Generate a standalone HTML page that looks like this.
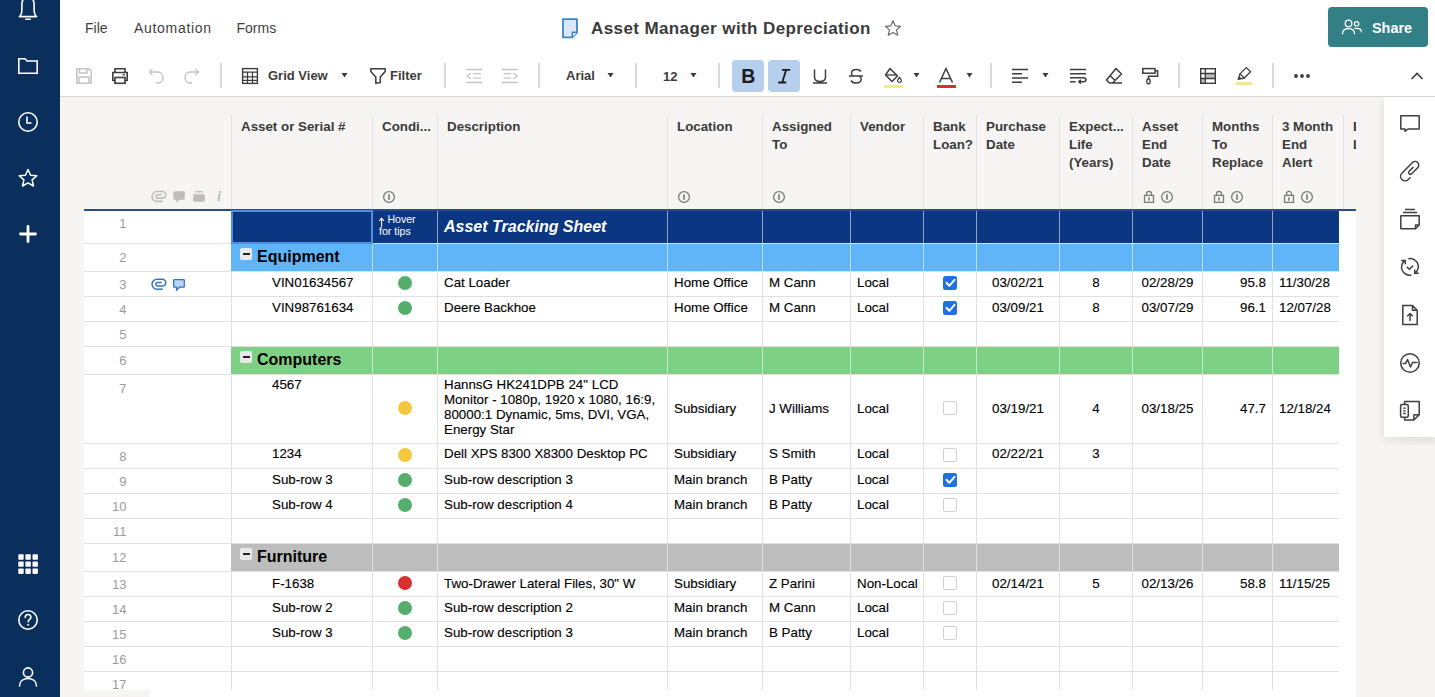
<!DOCTYPE html>
<html><head><meta charset="utf-8">
<style>
*{box-sizing:border-box;margin:0;padding:0}
html,body{width:1435px;height:697px;overflow:hidden;background:#f6f5f3;font-family:"Liberation Sans",sans-serif;position:relative}
.abs{position:absolute}
.t{position:absolute;white-space:nowrap;line-height:1}
.g{-webkit-text-stroke:0.12px #000}
svg{position:absolute;overflow:visible}
</style></head><body>

<div class="abs" style="left:0;top:0;width:60px;height:697px;background:#0b2f5c"></div>
<svg style="left:0;top:0" width="60" height="30" viewBox="0 0 60 30"><path d="M19.4 16.6 C21.6 15 21.9 12.5 21.9 9 V4 C21.9 0 24.5 -3 28 -3 C31.5 -3 34.1 0 34.1 4 V9 C34.1 12.5 34.4 15 36.6 16.6 Z" fill="none" stroke="#fff" stroke-width="1.6" stroke-linejoin="round"/><path d="M25.8 19.2 H30.2" stroke="#fff" stroke-width="1.6" stroke-linecap="round"/></svg>
<svg style="left:0;top:50" width="60" height="30" viewBox="0 50 60 30"><path d="M18.8 58.8 H25 L27 61 H37.2 V73.2 H18.8 Z" fill="none" stroke="#fff" stroke-width="1.6" stroke-linejoin="miter"/></svg>
<svg style="left:0;top:100" width="60" height="50" viewBox="0 100 60 50"><circle cx="28" cy="122" r="9.2" fill="none" stroke="#fff" stroke-width="1.6"/><path d="M27 116.5 V123 H31.5" fill="none" stroke="#fff" stroke-width="1.6"/></svg>
<svg style="left:0;top:160" width="60" height="40" viewBox="0 160 60 40"><path d="M28 169.5 L30.6 175.2 L36.8 175.8 L32.1 179.9 L33.5 186 L28 182.8 L22.5 186 L23.9 179.9 L19.2 175.8 L25.4 175.2 Z" fill="none" stroke="#fff" stroke-width="1.5" stroke-linejoin="round"/></svg>
<svg style="left:0;top:220" width="60" height="30" viewBox="0 220 60 30"><path d="M28 226.5 V241.5 M20.5 234 H35.5" stroke="#fff" stroke-width="2.8" stroke-linecap="round"/></svg>
<svg style="left:0;top:540" width="60" height="40" viewBox="0 540 60 40"><rect x="18.3" y="554.3" width="5.4" height="5.4" rx="0.8" fill="#fff"/><rect x="25.4" y="554.3" width="5.4" height="5.4" rx="0.8" fill="#fff"/><rect x="32.5" y="554.3" width="5.4" height="5.4" rx="0.8" fill="#fff"/><rect x="18.3" y="561.4" width="5.4" height="5.4" rx="0.8" fill="#fff"/><rect x="25.4" y="561.4" width="5.4" height="5.4" rx="0.8" fill="#fff"/><rect x="32.5" y="561.4" width="5.4" height="5.4" rx="0.8" fill="#fff"/><rect x="18.3" y="568.5" width="5.4" height="5.4" rx="0.8" fill="#fff"/><rect x="25.4" y="568.5" width="5.4" height="5.4" rx="0.8" fill="#fff"/><rect x="32.5" y="568.5" width="5.4" height="5.4" rx="0.8" fill="#fff"/></svg>
<svg style="left:0;top:600" width="60" height="40" viewBox="0 600 60 40"><circle cx="28" cy="620" r="9.2" fill="none" stroke="#fff" stroke-width="1.6"/><path d="M25.2 617.5 C25.2 615.5 26.5 614.5 28 614.5 C29.6 614.5 30.9 615.6 30.9 617.2 C30.9 619.3 28.2 619.6 28.2 621.8" fill="none" stroke="#fff" stroke-width="1.6" stroke-linecap="round"/><circle cx="28.2" cy="624.8" r="1" fill="#fff"/></svg>
<svg style="left:0;top:660" width="60" height="37" viewBox="0 660 60 37"><circle cx="28" cy="672.5" r="4.6" fill="none" stroke="#fff" stroke-width="1.6"/><path d="M19.5 686 C19.5 681 23.5 678.5 28 678.5 C32.5 678.5 36.5 681 36.5 686" fill="none" stroke="#fff" stroke-width="1.6" stroke-linecap="round"/></svg>
<div class="abs" style="left:60px;top:0;width:1375px;height:96px;background:#fff"></div>
<div class="abs" style="left:60px;top:96px;width:1375px;height:1px;background:#d6d6d6"></div>
<div class="t" style="left:85px;top:21.3px;font-size:14px;color:#3f3f3f;letter-spacing:0px">File</div>
<div class="t" style="left:134px;top:21.3px;font-size:14px;color:#3f3f3f;letter-spacing:0.7px">Automation</div>
<div class="t" style="left:236.5px;top:21.3px;font-size:14px;color:#3f3f3f;letter-spacing:0px">Forms</div>
<svg style="left:0;top:0" width="1" height="1" viewBox="0 0 1 1"><path d="M563 19.1 H577 V32.6 L572.3 37.3 H563 Z" fill="#dde6f8" stroke="#3a84c9" stroke-width="1.8" stroke-linejoin="round"/><path d="M577 32.2 H572.4 V37.2" fill="#fff" stroke="#3a84c9" stroke-width="1.6"/></svg>
<div class="t" style="left:591px;top:20px;font-size:17px;font-weight:bold;color:#3b3b3b;letter-spacing:0.4px">Asset Manager with Depreciation</div>
<svg style="left:0;top:0" width="1" height="1" viewBox="0 0 1 1"><path d="M893 20.8 L895.2 25.8 L900.6 26.3 L896.5 29.9 L897.8 35.2 L893 32.4 L888.2 35.2 L889.5 29.9 L885.4 26.3 L890.8 25.8 Z" fill="none" stroke="#6b6b6b" stroke-width="1.2" stroke-linejoin="round"/></svg>
<div class="abs" style="left:1328px;top:7px;width:100px;height:40px;background:#337f86;border-radius:4px"></div>
<svg style="left:0;top:0" width="1" height="1" viewBox="0 0 1 1"><circle cx="1348.5" cy="23.5" r="3.3" fill="none" stroke="#fff" stroke-width="1.3"/><path d="M1342.5 33.8 C1342.5 30.3 1345 28.6 1348.5 28.6 C1352 28.6 1354.5 30.3 1354.5 33.8" fill="none" stroke="#fff" stroke-width="1.3" stroke-linecap="round"/><circle cx="1356.6" cy="23.8" r="2.2" fill="none" stroke="#fff" stroke-width="1.2"/><path d="M1354.8 28.4 C1355.3 28.3 1355.9 28.3 1356.5 28.3 C1359.5 28.3 1361.5 29.7 1361.5 32" fill="none" stroke="#fff" stroke-width="1.2" stroke-linecap="round"/></svg>
<div class="t" style="left:1372px;top:20.5px;font-size:14.4px;font-weight:bold;color:#fff">Share</div>
<div class="abs" style="left:220px;top:63px;width:2px;height:25px;background:#d9d9d9"></div>
<div class="abs" style="left:444px;top:63px;width:2px;height:25px;background:#d9d9d9"></div>
<div class="abs" style="left:538px;top:63px;width:2px;height:25px;background:#d9d9d9"></div>
<div class="abs" style="left:635px;top:63px;width:2px;height:25px;background:#d9d9d9"></div>
<div class="abs" style="left:718px;top:63px;width:2px;height:25px;background:#d9d9d9"></div>
<div class="abs" style="left:990px;top:63px;width:2px;height:25px;background:#d9d9d9"></div>
<div class="abs" style="left:1178px;top:63px;width:2px;height:25px;background:#d9d9d9"></div>
<div class="abs" style="left:1272px;top:63px;width:2px;height:25px;background:#d9d9d9"></div>
<svg style="left:0;top:0" width="1" height="1" viewBox="0 0 1 1"><path d="M76.8 68.8 H89 L91.2 71 V83.2 H76.8 Z" fill="none" stroke="#c4c4c4" stroke-width="1.5"/><path d="M79.5 69 V73 H87 V69 M79 83 V77 H89 V83" fill="none" stroke="#c4c4c4" stroke-width="1.5"/><path d="M115 72 V68.8 H125 V72 M115 80.5 H112.8 V72.5 H127.2 V80.5 H125" fill="none" stroke="#3c3c3c" stroke-width="1.6" stroke-linejoin="round"/><rect x="115" y="77.5" width="10" height="5.8" fill="none" stroke="#3c3c3c" stroke-width="1.6"/><path d="M122.5 74.8 H125" stroke="#3c3c3c" stroke-width="1.3"/><path d="M150 72 H158 C161 72 163 74.5 163 77.5 C163 80.5 161 83 158 83 H156" fill="none" stroke="#c4c4c4" stroke-width="1.4"/><path d="M152.5 69 L149.5 72 L152.5 75" fill="none" stroke="#c4c4c4" stroke-width="1.4"/><path d="M198 72 H190 C187 72 185 74.5 185 77.5 C185 80.5 187 83 190 83 H192" fill="none" stroke="#c4c4c4" stroke-width="1.4"/><path d="M195.5 69 L198.5 72 L195.5 75" fill="none" stroke="#c4c4c4" stroke-width="1.4"/><rect x="242.6" y="68.6" width="14.8" height="14.8" fill="none" stroke="#3c3c3c" stroke-width="1.4"/><path d="M242.6 72.2 H257.4 M242.6 76.8 H257.4 M242.6 80.4 H257.4 M247.5 72.2 V83.4 M252.5 72.2 V83.4" fill="none" stroke="#3c3c3c" stroke-width="1.2"/><path d="M341.5 73 H347.5 L344.5 77.5 Z" fill="#3c3c3c"/><path d="M607.5 73 H613.5 L610.5 77.5 Z" fill="#3c3c3c"/><path d="M690.5 73 H696.5 L693.5 77.5 Z" fill="#3c3c3c"/><path d="M913.5 73 H919.5 L916.5 77.5 Z" fill="#3c3c3c"/><path d="M966.5 73 H972.5 L969.5 77.5 Z" fill="#3c3c3c"/><path d="M1042.5 73 H1048.5 L1045.5 77.5 Z" fill="#3c3c3c"/><path d="M370.8 68.8 H385.2 V71.6 L380.3 76.9 V82.6 L375.8 83.3 V76.9 L370.8 71.6 Z" fill="none" stroke="#3c3c3c" stroke-width="1.5" stroke-linejoin="round"/><path d="M466 69.5 H482 M473.2 73.6 H481 M473.2 78.1 H481 M466 82.5 H482 M471 73.1 L467.3 75.9 L471 78.7" fill="none" stroke="#c4c4c4" stroke-width="1.3"/><path d="M502 69.5 H518 M503.5 73.6 H511.3 M503.5 78.1 H511.3 M502 82.5 H518 M513.5 73.1 L517.2 75.9 L513.5 78.7" fill="none" stroke="#c4c4c4" stroke-width="1.3"/><path d="M814.5 69.5 V77 C814.5 80 816.5 81.5 820 81.5 C823.5 81.5 825.5 80 825.5 77 V69.5 M813 83 H827" fill="none" stroke="#3c3c3c" stroke-width="1.5"/><path d="M861 71.5 C860 70 858.5 69.5 856.5 69.5 C853.5 69.5 851.5 71 851.5 73.2 M861.2 79 C861.2 81.5 859 83 856 83 C853.5 83 852 82 851 80.5 M849 76 H863" fill="none" stroke="#3c3c3c" stroke-width="1.5"/><path d="M853 76 C851.5 75 851.5 74 851.5 73.2 M859 76 C860.5 77 861.2 78 861.2 79" fill="none" stroke="#3c3c3c" stroke-width="1.5"/><path d="M890 68.5 L897.5 76 L892 81.5 L885.5 75 Z" fill="none" stroke="#3c3c3c" stroke-width="1.5" stroke-linejoin="round"/><path d="M886 75 H897" stroke="#3c3c3c" stroke-width="1.3"/><path d="M899.5 77.5 C900.8 79 901.5 80 901.5 80.8 C901.5 81.7 900.6 82.3 899.5 82.3 C898.4 82.3 897.5 81.7 897.5 80.8 C897.5 80 898.2 79 899.5 77.5 Z" fill="none" stroke="#3c3c3c" stroke-width="1.2"/><rect x="884" y="85" width="19" height="3" fill="#f4ee80"/><path d="M939.5 82.5 L946 68.5 L952.5 82.5 M941.5 78.5 H950.5" fill="none" stroke="#3c3c3c" stroke-width="1.5"/><rect x="937" y="85" width="19" height="3" fill="#d8302b"/><path d="M1012 69.5 H1028 M1012 73.8 H1022 M1012 78 H1028 M1012 82.3 H1022" fill="none" stroke="#3c3c3c" stroke-width="1.5"/><path d="M1070 69.5 H1086 M1070 73.8 H1086 M1070 77.8 H1083.2 C1085.2 77.8 1086 78.8 1086 79.8 C1086 81 1085.2 81.8 1083.5 81.8 H1079 M1070 81.8 H1075.6 M1080.8 79.9 L1078.9 81.8 L1080.8 83.7" fill="none" stroke="#3c3c3c" stroke-width="1.5"/><path d="M1116 68.5 L1121.5 74 L1112.5 83 H1109.5 L1106.5 80 Z M1110.5 76 L1115.5 81 M1112.5 83 H1122" fill="none" stroke="#3c3c3c" stroke-width="1.5" stroke-linejoin="round"/><rect x="1142.8" y="68.6" width="12.2" height="4.6" fill="none" stroke="#3c3c3c" stroke-width="1.5"/><path d="M1155 70.8 H1157.6 V76.2 H1148.5 V79" fill="none" stroke="#3c3c3c" stroke-width="1.5"/><rect x="1147" y="79" width="3" height="4.8" rx="1" fill="none" stroke="#3c3c3c" stroke-width="1.4"/><rect x="1205.3" y="73.5" width="10" height="5" fill="#bdbdbd"/><rect x="1200.7" y="78.5" width="4.6" height="4.8" fill="#bdbdbd"/><rect x="1200.7" y="68.7" width="14.6" height="14.6" fill="none" stroke="#3c3c3c" stroke-width="1.4"/><path d="M1200.7 73.5 H1215.3 M1200.7 78.5 H1215.3 M1205.3 68.7 V83.3" fill="none" stroke="#3c3c3c" stroke-width="1.3"/><path d="M1246.3 67.6 L1250.6 71.7 L1244.3 78 L1240 73.9 Z M1240 73.9 L1238.2 79.3 L1244.3 78 M1239 77 L1241.2 79" fill="none" stroke="#3c3c3c" stroke-width="1.3" stroke-linejoin="round"/><rect x="1236" y="82" width="16" height="3" fill="#f6e49c"/><circle cx="1296" cy="76" r="1.9" fill="#3c3c3c"/><circle cx="1302" cy="76" r="1.9" fill="#3c3c3c"/><circle cx="1308" cy="76" r="1.9" fill="#3c3c3c"/><path d="M1411.5 79 L1417 73.5 L1422.5 79" fill="none" stroke="#3c3c3c" stroke-width="1.6"/></svg>
<div class="abs" style="left:732px;top:60px;width:32px;height:32px;background:#b6cfec;border-radius:4px"></div>
<div class="abs" style="left:768px;top:60px;width:32px;height:32px;background:#b6cfec;border-radius:4px"></div>
<div class="t" style="left:741.3px;top:67.2px;font-size:19.5px;font-weight:bold;color:#1b1b1b">B</div>
<svg style="left:0;top:0" width="1" height="1" viewBox="0 0 1 1"><path d="M782 69.9 H790.2 M778.2 82.5 H786.2 M786.1 69.9 L782.2 82.5" fill="none" stroke="#1b1b1b" stroke-width="1.8"/></svg>
<div class="t" style="left:268px;top:68.9px;font-size:13px;font-weight:bold;color:#3c3c3c">Grid View</div>
<div class="t" style="left:390px;top:68.6px;font-size:13px;font-weight:bold;color:#3c3c3c">Filter</div>
<div class="t" style="left:566px;top:69px;font-size:13px;font-weight:bold;color:#3c3c3c">Arial</div>
<div class="t" style="left:663px;top:69.5px;font-size:13px;font-weight:bold;color:#3c3c3c">12</div>
<div class="abs" style="left:231px;top:115px;width:1px;height:94px;background:#e2e1df"></div>
<div class="abs" style="left:372px;top:115px;width:1px;height:94px;background:#e2e1df"></div>
<div class="abs" style="left:437px;top:115px;width:1px;height:94px;background:#e2e1df"></div>
<div class="abs" style="left:667px;top:115px;width:1px;height:94px;background:#e2e1df"></div>
<div class="abs" style="left:762px;top:115px;width:1px;height:94px;background:#e2e1df"></div>
<div class="abs" style="left:850px;top:115px;width:1px;height:94px;background:#e2e1df"></div>
<div class="abs" style="left:923px;top:115px;width:1px;height:94px;background:#e2e1df"></div>
<div class="abs" style="left:976px;top:115px;width:1px;height:94px;background:#e2e1df"></div>
<div class="abs" style="left:1059px;top:115px;width:1px;height:94px;background:#e2e1df"></div>
<div class="abs" style="left:1132px;top:115px;width:1px;height:94px;background:#e2e1df"></div>
<div class="abs" style="left:1202px;top:115px;width:1px;height:94px;background:#e2e1df"></div>
<div class="abs" style="left:1272px;top:115px;width:1px;height:94px;background:#e2e1df"></div>
<div class="abs" style="left:1343px;top:115px;width:1px;height:94px;background:#e2e1df"></div>
<div class="abs" style="left:241px;top:117.5px;font-size:13.33px;font-weight:bold;color:#3a3a3a;line-height:18px;white-space:nowrap">Asset or Serial #</div>
<div class="abs" style="left:382px;top:117.5px;font-size:13.33px;font-weight:bold;color:#3a3a3a;line-height:18px;white-space:nowrap">Condi...</div>
<div class="abs" style="left:447px;top:117.5px;font-size:13.33px;font-weight:bold;color:#3a3a3a;line-height:18px;white-space:nowrap">Description</div>
<div class="abs" style="left:677px;top:117.5px;font-size:13.33px;font-weight:bold;color:#3a3a3a;line-height:18px;white-space:nowrap">Location</div>
<div class="abs" style="left:772px;top:117.5px;font-size:13.33px;font-weight:bold;color:#3a3a3a;line-height:18px;white-space:nowrap">Assigned<br>To</div>
<div class="abs" style="left:860px;top:117.5px;font-size:13.33px;font-weight:bold;color:#3a3a3a;line-height:18px;white-space:nowrap">Vendor</div>
<div class="abs" style="left:933px;top:117.5px;font-size:13.33px;font-weight:bold;color:#3a3a3a;line-height:18px;white-space:nowrap">Bank<br>Loan?</div>
<div class="abs" style="left:986px;top:117.5px;font-size:13.33px;font-weight:bold;color:#3a3a3a;line-height:18px;white-space:nowrap">Purchase<br>Date</div>
<div class="abs" style="left:1069px;top:117.5px;font-size:13.33px;font-weight:bold;color:#3a3a3a;line-height:18px;white-space:nowrap">Expect...<br>Life<br>(Years)</div>
<div class="abs" style="left:1142px;top:117.5px;font-size:13.33px;font-weight:bold;color:#3a3a3a;line-height:18px;white-space:nowrap">Asset<br>End<br>Date</div>
<div class="abs" style="left:1212px;top:117.5px;font-size:13.33px;font-weight:bold;color:#3a3a3a;line-height:18px;white-space:nowrap">Months<br>To<br>Replace</div>
<div class="abs" style="left:1282px;top:117.5px;font-size:13.33px;font-weight:bold;color:#3a3a3a;line-height:18px;white-space:nowrap">3 Month<br>End<br>Alert</div>
<div class="abs" style="left:1343px;top:97px;width:13px;height:112px;overflow:hidden"><div class="abs" style="left:10px;top:21px;font-size:13.33px;font-weight:bold;color:#3a3a3a;line-height:18px;white-space:nowrap">Bank<br>Loan</div></div>
<div class="t" style="left:217px;top:188.5px;font-family:&quot;Liberation Serif&quot;,serif;font-style:italic;font-weight:bold;font-size:15px;color:#bdbdbd">i</div>
<svg style="left:0;top:0" width="1" height="1" viewBox="0 0 1 1"><circle cx="389.0" cy="197.0" r="5.4" fill="none" stroke="#7a7a7a" stroke-width="1.3"/><path d="M389.0 194.3 V199.7" stroke="#6f6f6f" stroke-width="1.5"/><circle cx="684.0" cy="197.0" r="5.4" fill="none" stroke="#7a7a7a" stroke-width="1.3"/><path d="M684.0 194.3 V199.7" stroke="#6f6f6f" stroke-width="1.5"/><circle cx="779.0" cy="197.0" r="5.4" fill="none" stroke="#7a7a7a" stroke-width="1.3"/><path d="M779.0 194.3 V199.7" stroke="#6f6f6f" stroke-width="1.5"/><path d="M1146.5 195.4 V193.9 A2.5 2.5 0 0 1 1151.5 193.9 V195.4" fill="none" stroke="#7a7a7a" stroke-width="1.3"/><rect x="1144.5" y="195.4" width="9" height="7" fill="none" stroke="#7a7a7a" stroke-width="1.3"/><path d="M1149.0 197.2 V200.8" stroke="#7a7a7a" stroke-width="1.5"/><circle cx="1167.0" cy="197.0" r="5.4" fill="none" stroke="#7a7a7a" stroke-width="1.3"/><path d="M1167.0 194.3 V199.7" stroke="#6f6f6f" stroke-width="1.5"/><path d="M1216.5 195.4 V193.9 A2.5 2.5 0 0 1 1221.5 193.9 V195.4" fill="none" stroke="#7a7a7a" stroke-width="1.3"/><rect x="1214.5" y="195.4" width="9" height="7" fill="none" stroke="#7a7a7a" stroke-width="1.3"/><path d="M1219.0 197.2 V200.8" stroke="#7a7a7a" stroke-width="1.5"/><circle cx="1237.0" cy="197.0" r="5.4" fill="none" stroke="#7a7a7a" stroke-width="1.3"/><path d="M1237.0 194.3 V199.7" stroke="#6f6f6f" stroke-width="1.5"/><path d="M1286.5 195.4 V193.9 A2.5 2.5 0 0 1 1291.5 193.9 V195.4" fill="none" stroke="#7a7a7a" stroke-width="1.3"/><rect x="1284.5" y="195.4" width="9" height="7" fill="none" stroke="#7a7a7a" stroke-width="1.3"/><path d="M1289.0 197.2 V200.8" stroke="#7a7a7a" stroke-width="1.5"/><circle cx="1307.0" cy="197.0" r="5.4" fill="none" stroke="#7a7a7a" stroke-width="1.3"/><path d="M1307.0 194.3 V199.7" stroke="#6f6f6f" stroke-width="1.5"/><path transform="translate(0 -87.8)" d="M162.8 289.2 H157 A4.95 4.95 0 0 1 157 279.3 H162.4 A3.3 3.3 0 0 1 162.4 285.9 H157.5 A1.7 1.7 0 0 1 157.5 282.5 H161.8" fill="none" stroke="#bdbdbd" stroke-width="1.6"/><path d="M174.5 191.2 H183.6 Q184.8 191.2 184.8 192.4 V198.6 Q184.8 199.8 183.6 199.8 H179.6 L176.3 202.8 V199.8 H174.5 Q173.3 199.8 173.3 198.6 V192.4 Q173.3 191.2 174.5 191.2 Z" fill="#bdbdbd"/><rect x="193.2" y="194.2" width="11.6" height="7.6" rx="1.3" fill="#bdbdbd"/><path d="M195.4 191.8 H202.6" stroke="#bdbdbd" stroke-width="1.4"/></svg>
<div class="abs" style="left:84px;top:209px;width:1272px;height:2px;background:#2b4a86"></div>
<div class="abs" style="left:84px;top:211px;width:1272px;height:479px;background:#fff"></div>
<div class="abs" style="left:84px;top:690px;width:66px;height:7px;background:#f6f5f3"></div>
<div class="abs" style="left:150px;top:690px;width:1206px;height:7px;background:#fff"></div>
<div class="abs" style="left:84px;top:243px;width:1255px;height:1px;background:#e0e0e0"></div>
<div class="abs" style="left:84px;top:271px;width:1255px;height:1px;background:#e0e0e0"></div>
<div class="abs" style="left:84px;top:296px;width:1255px;height:1px;background:#e0e0e0"></div>
<div class="abs" style="left:84px;top:321px;width:1255px;height:1px;background:#e0e0e0"></div>
<div class="abs" style="left:84px;top:346px;width:1255px;height:1px;background:#e0e0e0"></div>
<div class="abs" style="left:84px;top:374px;width:1255px;height:1px;background:#e0e0e0"></div>
<div class="abs" style="left:84px;top:443px;width:1255px;height:1px;background:#e0e0e0"></div>
<div class="abs" style="left:84px;top:468px;width:1255px;height:1px;background:#e0e0e0"></div>
<div class="abs" style="left:84px;top:493px;width:1255px;height:1px;background:#e0e0e0"></div>
<div class="abs" style="left:84px;top:518px;width:1255px;height:1px;background:#e0e0e0"></div>
<div class="abs" style="left:84px;top:543px;width:1255px;height:1px;background:#e0e0e0"></div>
<div class="abs" style="left:84px;top:571px;width:1255px;height:1px;background:#e0e0e0"></div>
<div class="abs" style="left:84px;top:596px;width:1255px;height:1px;background:#e0e0e0"></div>
<div class="abs" style="left:84px;top:621px;width:1255px;height:1px;background:#e0e0e0"></div>
<div class="abs" style="left:84px;top:646px;width:1255px;height:1px;background:#e0e0e0"></div>
<div class="abs" style="left:84px;top:671px;width:1255px;height:1px;background:#e0e0e0"></div>
<div class="abs" style="left:231px;top:211px;width:1px;height:479px;background:#e0e0e0"></div>
<div class="abs" style="left:372px;top:211px;width:1px;height:479px;background:#e0e0e0"></div>
<div class="abs" style="left:437px;top:211px;width:1px;height:479px;background:#e0e0e0"></div>
<div class="abs" style="left:667px;top:211px;width:1px;height:479px;background:#e0e0e0"></div>
<div class="abs" style="left:762px;top:211px;width:1px;height:479px;background:#e0e0e0"></div>
<div class="abs" style="left:850px;top:211px;width:1px;height:479px;background:#e0e0e0"></div>
<div class="abs" style="left:923px;top:211px;width:1px;height:479px;background:#e0e0e0"></div>
<div class="abs" style="left:976px;top:211px;width:1px;height:479px;background:#e0e0e0"></div>
<div class="abs" style="left:1059px;top:211px;width:1px;height:479px;background:#e0e0e0"></div>
<div class="abs" style="left:1132px;top:211px;width:1px;height:479px;background:#e0e0e0"></div>
<div class="abs" style="left:1202px;top:211px;width:1px;height:479px;background:#e0e0e0"></div>
<div class="abs" style="left:1272px;top:211px;width:1px;height:479px;background:#e0e0e0"></div>
<div class="abs" style="left:231px;top:211px;width:1108px;height:32px;background:#0b3682"></div>
<div class="abs" style="left:372px;top:211px;width:1px;height:32px;background:rgba(255,255,255,0.55)"></div>
<div class="abs" style="left:437px;top:211px;width:1px;height:32px;background:rgba(255,255,255,0.55)"></div>
<div class="abs" style="left:667px;top:211px;width:1px;height:32px;background:rgba(255,255,255,0.55)"></div>
<div class="abs" style="left:762px;top:211px;width:1px;height:32px;background:rgba(255,255,255,0.55)"></div>
<div class="abs" style="left:850px;top:211px;width:1px;height:32px;background:rgba(255,255,255,0.55)"></div>
<div class="abs" style="left:923px;top:211px;width:1px;height:32px;background:rgba(255,255,255,0.55)"></div>
<div class="abs" style="left:976px;top:211px;width:1px;height:32px;background:rgba(255,255,255,0.55)"></div>
<div class="abs" style="left:1059px;top:211px;width:1px;height:32px;background:rgba(255,255,255,0.55)"></div>
<div class="abs" style="left:1132px;top:211px;width:1px;height:32px;background:rgba(255,255,255,0.55)"></div>
<div class="abs" style="left:1202px;top:211px;width:1px;height:32px;background:rgba(255,255,255,0.55)"></div>
<div class="abs" style="left:1272px;top:211px;width:1px;height:32px;background:rgba(255,255,255,0.55)"></div>
<div class="abs" style="left:231px;top:244px;width:1108px;height:27px;background:#5fb5f7"></div>
<div class="abs" style="left:372px;top:244px;width:1px;height:27px;background:rgba(255,255,255,0.55)"></div>
<div class="abs" style="left:437px;top:244px;width:1px;height:27px;background:rgba(255,255,255,0.55)"></div>
<div class="abs" style="left:667px;top:244px;width:1px;height:27px;background:rgba(255,255,255,0.55)"></div>
<div class="abs" style="left:762px;top:244px;width:1px;height:27px;background:rgba(255,255,255,0.55)"></div>
<div class="abs" style="left:850px;top:244px;width:1px;height:27px;background:rgba(255,255,255,0.55)"></div>
<div class="abs" style="left:923px;top:244px;width:1px;height:27px;background:rgba(255,255,255,0.55)"></div>
<div class="abs" style="left:976px;top:244px;width:1px;height:27px;background:rgba(255,255,255,0.55)"></div>
<div class="abs" style="left:1059px;top:244px;width:1px;height:27px;background:rgba(255,255,255,0.55)"></div>
<div class="abs" style="left:1132px;top:244px;width:1px;height:27px;background:rgba(255,255,255,0.55)"></div>
<div class="abs" style="left:1202px;top:244px;width:1px;height:27px;background:rgba(255,255,255,0.55)"></div>
<div class="abs" style="left:1272px;top:244px;width:1px;height:27px;background:rgba(255,255,255,0.55)"></div>
<div class="abs" style="left:231px;top:347px;width:1108px;height:27px;background:#7ed085"></div>
<div class="abs" style="left:372px;top:347px;width:1px;height:27px;background:rgba(255,255,255,0.55)"></div>
<div class="abs" style="left:437px;top:347px;width:1px;height:27px;background:rgba(255,255,255,0.55)"></div>
<div class="abs" style="left:667px;top:347px;width:1px;height:27px;background:rgba(255,255,255,0.55)"></div>
<div class="abs" style="left:762px;top:347px;width:1px;height:27px;background:rgba(255,255,255,0.55)"></div>
<div class="abs" style="left:850px;top:347px;width:1px;height:27px;background:rgba(255,255,255,0.55)"></div>
<div class="abs" style="left:923px;top:347px;width:1px;height:27px;background:rgba(255,255,255,0.55)"></div>
<div class="abs" style="left:976px;top:347px;width:1px;height:27px;background:rgba(255,255,255,0.55)"></div>
<div class="abs" style="left:1059px;top:347px;width:1px;height:27px;background:rgba(255,255,255,0.55)"></div>
<div class="abs" style="left:1132px;top:347px;width:1px;height:27px;background:rgba(255,255,255,0.55)"></div>
<div class="abs" style="left:1202px;top:347px;width:1px;height:27px;background:rgba(255,255,255,0.55)"></div>
<div class="abs" style="left:1272px;top:347px;width:1px;height:27px;background:rgba(255,255,255,0.55)"></div>
<div class="abs" style="left:231px;top:544px;width:1108px;height:27px;background:#bdbdbd"></div>
<div class="abs" style="left:372px;top:544px;width:1px;height:27px;background:rgba(255,255,255,0.55)"></div>
<div class="abs" style="left:437px;top:544px;width:1px;height:27px;background:rgba(255,255,255,0.55)"></div>
<div class="abs" style="left:667px;top:544px;width:1px;height:27px;background:rgba(255,255,255,0.55)"></div>
<div class="abs" style="left:762px;top:544px;width:1px;height:27px;background:rgba(255,255,255,0.55)"></div>
<div class="abs" style="left:850px;top:544px;width:1px;height:27px;background:rgba(255,255,255,0.55)"></div>
<div class="abs" style="left:923px;top:544px;width:1px;height:27px;background:rgba(255,255,255,0.55)"></div>
<div class="abs" style="left:976px;top:544px;width:1px;height:27px;background:rgba(255,255,255,0.55)"></div>
<div class="abs" style="left:1059px;top:544px;width:1px;height:27px;background:rgba(255,255,255,0.55)"></div>
<div class="abs" style="left:1132px;top:544px;width:1px;height:27px;background:rgba(255,255,255,0.55)"></div>
<div class="abs" style="left:1202px;top:544px;width:1px;height:27px;background:rgba(255,255,255,0.55)"></div>
<div class="abs" style="left:1272px;top:544px;width:1px;height:27px;background:rgba(255,255,255,0.55)"></div>
<div class="abs" style="left:231px;top:210px;width:142px;height:34px;border:2px solid #4f8fdc"></div>
<div class="t" style="left:0;width:126.5px;text-align:right;top:217.3px;font-size:13px;color:#9b9b9b">1</div>
<div class="t" style="left:0;width:126.5px;text-align:right;top:250.6px;font-size:13px;color:#9b9b9b">2</div>
<div class="t" style="left:0;width:126.5px;text-align:right;top:278.1px;font-size:13px;color:#9b9b9b">3</div>
<div class="t" style="left:0;width:126.5px;text-align:right;top:303.1px;font-size:13px;color:#9b9b9b">4</div>
<div class="t" style="left:0;width:126.5px;text-align:right;top:328.1px;font-size:13px;color:#9b9b9b">5</div>
<div class="t" style="left:0;width:126.5px;text-align:right;top:353.6px;font-size:13px;color:#9b9b9b">6</div>
<div class="t" style="left:0;width:126.5px;text-align:right;top:381.6px;font-size:13px;color:#9b9b9b">7</div>
<div class="t" style="left:0;width:126.5px;text-align:right;top:450.1px;font-size:13px;color:#9b9b9b">8</div>
<div class="t" style="left:0;width:126.5px;text-align:right;top:475.1px;font-size:13px;color:#9b9b9b">9</div>
<div class="t" style="left:0;width:126.5px;text-align:right;top:500.1px;font-size:13px;color:#9b9b9b">10</div>
<div class="t" style="left:0;width:126.5px;text-align:right;top:525.1px;font-size:13px;color:#9b9b9b">11</div>
<div class="t" style="left:0;width:126.5px;text-align:right;top:550.6px;font-size:13px;color:#9b9b9b">12</div>
<div class="t" style="left:0;width:126.5px;text-align:right;top:578.1px;font-size:13px;color:#9b9b9b">13</div>
<div class="t" style="left:0;width:126.5px;text-align:right;top:603.1px;font-size:13px;color:#9b9b9b">14</div>
<div class="t" style="left:0;width:126.5px;text-align:right;top:628.1px;font-size:13px;color:#9b9b9b">15</div>
<div class="t" style="left:0;width:126.5px;text-align:right;top:653.1px;font-size:13px;color:#9b9b9b">16</div>
<div class="t" style="left:0;width:126.5px;text-align:right;top:678.1px;font-size:13px;color:#9b9b9b">17</div>
<div class="t" style="left:444px;top:218.9px;font-size:16px;color:#fff;font-weight:bold;font-style:italic;">Asset Tracking Sheet</div>
<div class="abs" style="left:379px;top:214.3px;font-size:10.6px;color:#fff;line-height:11.7px;white-space:nowrap"><span style="padding-left:8.4px">Hover</span><br>for tips</div>
<svg style="left:0;top:0" width="1" height="1" viewBox="0 0 1 1"><path d="M381.6 218.3 V226.6 M379.3 220.8 L381.6 218.3 L383.9 220.8" fill="none" stroke="#fff" stroke-width="1.1"/></svg>
<div class="abs" style="left:240px;top:248px;width:12px;height:12px;background:#e9e9e9;border-radius:2px"></div>
<div class="abs" style="left:243px;top:253px;width:6.5px;height:2px;background:#222"></div>
<div class="t" style="left:257px;top:248.5px;font-size:16px;font-weight:bold;color:#000">Equipment</div>
<div class="abs" style="left:240px;top:351px;width:12px;height:12px;background:#e9e9e9;border-radius:2px"></div>
<div class="abs" style="left:243px;top:356px;width:6.5px;height:2px;background:#222"></div>
<div class="t" style="left:257px;top:351.5px;font-size:16px;font-weight:bold;color:#000">Computers</div>
<div class="abs" style="left:240px;top:548px;width:12px;height:12px;background:#e9e9e9;border-radius:2px"></div>
<div class="abs" style="left:243px;top:553px;width:6.5px;height:2px;background:#222"></div>
<div class="t" style="left:257px;top:548.5px;font-size:16px;font-weight:bold;color:#000">Furniture</div>
<div class="t g" style="left:272px;top:276.1px;font-size:13.33px;color:#000;">VIN01634567</div>
<div class="abs" style="left:398px;top:276.0px;width:14px;height:14px;border-radius:50%;background:#55ae6c"></div>
<div class="t g" style="left:444px;top:276.1px;font-size:13.33px;color:#000;">Cat Loader</div>
<div class="t g" style="left:674px;top:276.1px;font-size:13.33px;color:#000;">Home Office</div>
<div class="t g" style="left:769px;top:276.1px;font-size:13.33px;color:#000;">M Cann</div>
<div class="t g" style="left:857px;top:276.1px;font-size:13.33px;color:#000;">Local</div>
<div class="abs" style="left:943px;top:276.0px;width:14px;height:14px;border-radius:2.5px;background:#1f70e0"></div>
<svg style="left:0;top:0" width="1" height="1" viewBox="0 0 1 1"><path d="M946.5 282.8 L949.3 285.8 L954.5 279.8" fill="none" stroke="#fff" stroke-width="2" stroke-linecap="round" stroke-linejoin="round"/></svg>
<div class="t g" style="left:977px;top:276.1px;font-size:13.33px;color:#000;width:82px;text-align:center;">03/02/21</div>
<div class="t g" style="left:1060px;top:276.1px;font-size:13.33px;color:#000;width:72px;text-align:center;">8</div>
<div class="t g" style="left:1133px;top:276.1px;font-size:13.33px;color:#000;width:69px;text-align:center;">02/28/29</div>
<div class="t g" style="left:1203px;top:276.1px;font-size:13.33px;color:#000;width:63px;text-align:right;">95.8</div>
<div class="t g" style="left:1279px;top:276.1px;font-size:13.33px;color:#000;">11/30/28</div>
<div class="t g" style="left:272px;top:301.1px;font-size:13.33px;color:#000;">VIN98761634</div>
<div class="abs" style="left:398px;top:301.0px;width:14px;height:14px;border-radius:50%;background:#55ae6c"></div>
<div class="t g" style="left:444px;top:301.1px;font-size:13.33px;color:#000;">Deere Backhoe</div>
<div class="t g" style="left:674px;top:301.1px;font-size:13.33px;color:#000;">Home Office</div>
<div class="t g" style="left:769px;top:301.1px;font-size:13.33px;color:#000;">M Cann</div>
<div class="t g" style="left:857px;top:301.1px;font-size:13.33px;color:#000;">Local</div>
<div class="abs" style="left:943px;top:301.0px;width:14px;height:14px;border-radius:2.5px;background:#1f70e0"></div>
<svg style="left:0;top:0" width="1" height="1" viewBox="0 0 1 1"><path d="M946.5 307.8 L949.3 310.8 L954.5 304.8" fill="none" stroke="#fff" stroke-width="2" stroke-linecap="round" stroke-linejoin="round"/></svg>
<div class="t g" style="left:977px;top:301.1px;font-size:13.33px;color:#000;width:82px;text-align:center;">03/09/21</div>
<div class="t g" style="left:1060px;top:301.1px;font-size:13.33px;color:#000;width:72px;text-align:center;">8</div>
<div class="t g" style="left:1133px;top:301.1px;font-size:13.33px;color:#000;width:69px;text-align:center;">03/07/29</div>
<div class="t g" style="left:1203px;top:301.1px;font-size:13.33px;color:#000;width:63px;text-align:right;">96.1</div>
<div class="t g" style="left:1279px;top:301.1px;font-size:13.33px;color:#000;">12/07/28</div>
<div class="t g" style="left:272px;top:378.1px;font-size:13.33px;color:#000;">4567</div>
<div class="abs" style="left:398px;top:401.0px;width:14px;height:14px;border-radius:50%;background:#f3c83f"></div>
<div class="t g" style="left:674px;top:402.0px;font-size:13.33px;color:#000;">Subsidiary</div>
<div class="t g" style="left:769px;top:402.0px;font-size:13.33px;color:#000;">J Williams</div>
<div class="t g" style="left:857px;top:402.0px;font-size:13.33px;color:#000;">Local</div>
<div class="abs" style="left:943px;top:401.0px;width:14px;height:14px;border-radius:2px;border:1px solid #cfcfcf;background:#fff"></div>
<div class="t g" style="left:977px;top:402.0px;font-size:13.33px;color:#000;width:82px;text-align:center;">03/19/21</div>
<div class="t g" style="left:1060px;top:402.0px;font-size:13.33px;color:#000;width:72px;text-align:center;">4</div>
<div class="t g" style="left:1133px;top:402.0px;font-size:13.33px;color:#000;width:69px;text-align:center;">03/18/25</div>
<div class="t g" style="left:1203px;top:402.0px;font-size:13.33px;color:#000;width:63px;text-align:right;">47.7</div>
<div class="t g" style="left:1279px;top:402.0px;font-size:13.33px;color:#000;">12/18/24</div>
<div class="t g" style="left:272px;top:447.3px;font-size:13.33px;color:#000;">1234</div>
<div class="abs" style="left:398px;top:448.0px;width:14px;height:14px;border-radius:50%;background:#f3c83f"></div>
<div class="t g" style="left:444px;top:447.3px;font-size:13.33px;color:#000;">Dell XPS 8300 X8300 Desktop PC</div>
<div class="t g" style="left:674px;top:447.3px;font-size:13.33px;color:#000;">Subsidiary</div>
<div class="t g" style="left:769px;top:447.3px;font-size:13.33px;color:#000;">S Smith</div>
<div class="t g" style="left:857px;top:447.3px;font-size:13.33px;color:#000;">Local</div>
<div class="abs" style="left:943px;top:448.0px;width:14px;height:14px;border-radius:2px;border:1px solid #cfcfcf;background:#fff"></div>
<div class="t g" style="left:977px;top:447.3px;font-size:13.33px;color:#000;width:82px;text-align:center;">02/22/21</div>
<div class="t g" style="left:1060px;top:447.3px;font-size:13.33px;color:#000;width:72px;text-align:center;">3</div>
<div class="t g" style="left:272px;top:473.1px;font-size:13.33px;color:#000;">Sub-row 3</div>
<div class="abs" style="left:398px;top:473.0px;width:14px;height:14px;border-radius:50%;background:#55ae6c"></div>
<div class="t g" style="left:444px;top:473.1px;font-size:13.33px;color:#000;">Sub-row description 3</div>
<div class="t g" style="left:674px;top:473.1px;font-size:13.33px;color:#000;">Main branch</div>
<div class="t g" style="left:769px;top:473.1px;font-size:13.33px;color:#000;">B Patty</div>
<div class="t g" style="left:857px;top:473.1px;font-size:13.33px;color:#000;">Local</div>
<div class="abs" style="left:943px;top:473.0px;width:14px;height:14px;border-radius:2.5px;background:#1f70e0"></div>
<svg style="left:0;top:0" width="1" height="1" viewBox="0 0 1 1"><path d="M946.5 479.8 L949.3 482.8 L954.5 476.8" fill="none" stroke="#fff" stroke-width="2" stroke-linecap="round" stroke-linejoin="round"/></svg>
<div class="t g" style="left:272px;top:498.1px;font-size:13.33px;color:#000;">Sub-row 4</div>
<div class="abs" style="left:398px;top:498.0px;width:14px;height:14px;border-radius:50%;background:#55ae6c"></div>
<div class="t g" style="left:444px;top:498.1px;font-size:13.33px;color:#000;">Sub-row description 4</div>
<div class="t g" style="left:674px;top:498.1px;font-size:13.33px;color:#000;">Main branch</div>
<div class="t g" style="left:769px;top:498.1px;font-size:13.33px;color:#000;">B Patty</div>
<div class="t g" style="left:857px;top:498.1px;font-size:13.33px;color:#000;">Local</div>
<div class="abs" style="left:943px;top:498.0px;width:14px;height:14px;border-radius:2px;border:1px solid #cfcfcf;background:#fff"></div>
<div class="t g" style="left:272px;top:577.0px;font-size:13.33px;color:#000;">F-1638</div>
<div class="abs" style="left:398px;top:576.0px;width:14px;height:14px;border-radius:50%;background:#d9302e"></div>
<div class="t g" style="left:444px;top:577.0px;font-size:13.33px;color:#000;">Two-Drawer Lateral Files, 30&quot; W</div>
<div class="t g" style="left:674px;top:577.0px;font-size:13.33px;color:#000;">Subsidiary</div>
<div class="t g" style="left:769px;top:577.0px;font-size:13.33px;color:#000;">Z Parini</div>
<div class="t g" style="left:857px;top:577.0px;font-size:13.33px;color:#000;">Non-Local</div>
<div class="abs" style="left:943px;top:576.0px;width:14px;height:14px;border-radius:2px;border:1px solid #cfcfcf;background:#fff"></div>
<div class="t g" style="left:977px;top:577.0px;font-size:13.33px;color:#000;width:82px;text-align:center;">02/14/21</div>
<div class="t g" style="left:1060px;top:577.0px;font-size:13.33px;color:#000;width:72px;text-align:center;">5</div>
<div class="t g" style="left:1133px;top:577.0px;font-size:13.33px;color:#000;width:69px;text-align:center;">02/13/26</div>
<div class="t g" style="left:1203px;top:577.0px;font-size:13.33px;color:#000;width:63px;text-align:right;">58.8</div>
<div class="t g" style="left:1279px;top:577.0px;font-size:13.33px;color:#000;">11/15/25</div>
<div class="t g" style="left:272px;top:601.1px;font-size:13.33px;color:#000;">Sub-row 2</div>
<div class="abs" style="left:398px;top:601.0px;width:14px;height:14px;border-radius:50%;background:#55ae6c"></div>
<div class="t g" style="left:444px;top:601.1px;font-size:13.33px;color:#000;">Sub-row description 2</div>
<div class="t g" style="left:674px;top:601.1px;font-size:13.33px;color:#000;">Main branch</div>
<div class="t g" style="left:769px;top:601.1px;font-size:13.33px;color:#000;">M Cann</div>
<div class="t g" style="left:857px;top:601.1px;font-size:13.33px;color:#000;">Local</div>
<div class="abs" style="left:943px;top:601.0px;width:14px;height:14px;border-radius:2px;border:1px solid #cfcfcf;background:#fff"></div>
<div class="t g" style="left:272px;top:626.1px;font-size:13.33px;color:#000;">Sub-row 3</div>
<div class="abs" style="left:398px;top:626.0px;width:14px;height:14px;border-radius:50%;background:#55ae6c"></div>
<div class="t g" style="left:444px;top:626.1px;font-size:13.33px;color:#000;">Sub-row description 3</div>
<div class="t g" style="left:674px;top:626.1px;font-size:13.33px;color:#000;">Main branch</div>
<div class="t g" style="left:769px;top:626.1px;font-size:13.33px;color:#000;">B Patty</div>
<div class="t g" style="left:857px;top:626.1px;font-size:13.33px;color:#000;">Local</div>
<div class="abs" style="left:943px;top:626.0px;width:14px;height:14px;border-radius:2px;border:1px solid #cfcfcf;background:#fff"></div>
<div class="abs g" style="left:444px;top:377.3px;font-size:13.33px;color:#000;line-height:15px;white-space:nowrap">HannsG HK241DPB 24&quot; LCD<br>Monitor - 1080p, 1920 x 1080, 16:9,<br>80000:1 Dynamic, 5ms, DVI, VGA,<br>Energy Star</div>
<svg style="left:0;top:0" width="1" height="1" viewBox="0 0 1 1"><path d="M162.8 289.2 H157 A4.95 4.95 0 0 1 157 279.3 H162.4 A3.3 3.3 0 0 1 162.4 285.9 H157.5 A1.7 1.7 0 0 1 157.5 282.5 H161.8" fill="none" stroke="#3473bd" stroke-width="1.5"/><path d="M174.4 279.6 H183.6 Q184.3 279.6 184.3 280.3 V286.5 Q184.3 287.2 183.6 287.2 H179.5 L176.5 290.3 V287.2 H174.4 Q173.7 287.2 173.7 286.5 V280.3 Q173.7 279.6 174.4 279.6 Z" fill="#b9d7f6" stroke="#3473bd" stroke-width="1.3" stroke-linejoin="round"/></svg>
<div class="abs" style="left:1376px;top:97px;width:59px;height:348px;background:linear-gradient(to right, rgba(0,0,0,0), rgba(0,0,0,0.035))"></div>
<div class="abs" style="left:1384px;top:97px;width:51px;height:340px;background:#fff;box-shadow:-2px 3px 8px rgba(0,0,0,0.07)"></div>
<svg style="left:0;top:0" width="1" height="1" viewBox="0 0 1 1"><path d="M1400.8 115.8 H1419.2 V129 H1408 L1405 131.3 V129 H1400.8 Z" fill="none" stroke="#3f3f3f" stroke-width="1.5" stroke-linejoin="round"/><path transform="translate(1410 171.4) rotate(-45)" d="M-4.4 4.5 L-7 4.5 A4.5 4.5 0 0 1 -7 -4.5 L8 -4.5 A3.65 3.65 0 0 1 8 2.8 L-0.5 2.8 A1.75 1.75 0 0 1 -0.5 -0.7 L5 -0.7" fill="none" stroke="#3f3f3f" stroke-width="1.5" stroke-linecap="round"/><path d="M1405 209.5 H1415 M1403 212.5 H1417 M1400.8 215.8 H1419.2 V225 L1415.5 228.7 H1400.8 Z M1419.2 225 H1415.5 V228.7" fill="none" stroke="#3f3f3f" stroke-width="1.5" stroke-linejoin="round"/><path d="M1405.2 260.4 A8 8 0 0 0 1411.4 274.9 M1408.3 258.8 A8 8 0 0 1 1414.9 273.1 M1401.2 260.5 H1405.3 V264.2 M1414.7 269.4 V273.2 H1418.8 M1406.8 266.9 L1409.4 269.3 L1413.2 265.4" fill="none" stroke="#3f3f3f" stroke-width="1.5" stroke-linecap="butt" stroke-linejoin="miter"/><path d="M1402.8 305.5 H1412.5 L1417.2 310.2 V324.5 H1402.8 Z M1412.5 305.5 V310.2 H1417.2 M1410 321 V313.5 M1407.2 316.3 L1410 313.5 L1412.8 316.3" fill="none" stroke="#3f3f3f" stroke-width="1.5" stroke-linejoin="round"/><circle cx="1410" cy="363" r="9.3" fill="none" stroke="#3f3f3f" stroke-width="1.5"/><path d="M1402.5 363.5 H1405.5 L1407.5 359.5 L1410.5 367 L1412.5 362.5 H1417.5" fill="none" stroke="#3f3f3f" stroke-width="1.5" stroke-linejoin="round"/><path d="M1404.6 404.5 V401.6 H1419.2 V414.7 L1413.9 420 H1404.6 V417.3 M1419.2 414.7 H1413.9 V420" fill="none" stroke="#3f3f3f" stroke-width="1.5" stroke-linejoin="round"/><rect x="1400.6" y="404.5" width="7.7" height="12.8" rx="1.5" fill="#fff" stroke="#3f3f3f" stroke-width="1.5"/><path d="M1403.2 408.1 H1405.8 M1403.2 410.9 H1405.8 M1403.2 413.5 H1405.8" stroke="#3f3f3f" stroke-width="1.3"/></svg>
</body></html>
